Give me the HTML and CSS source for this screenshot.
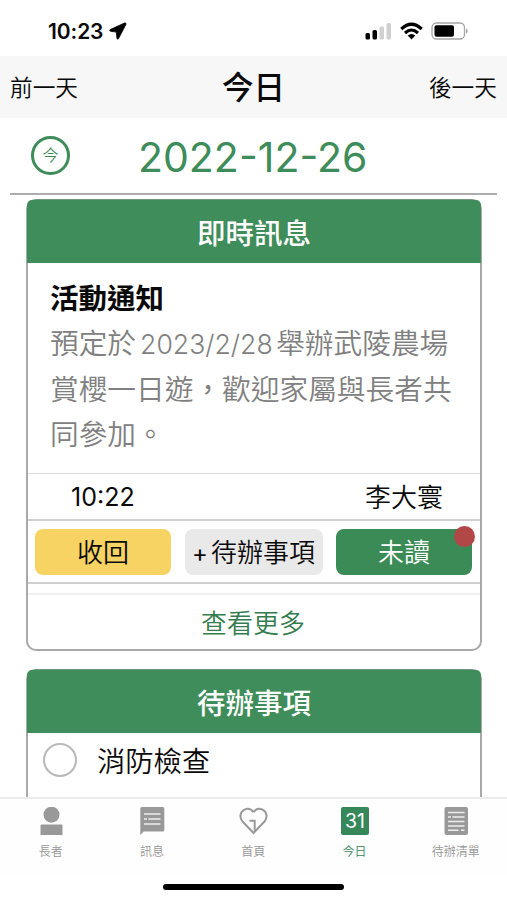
FILE: index.html
```html
<!DOCTYPE html>
<html lang="zh-Hant">
<head>
<meta charset="utf-8">
<meta name="viewport" content="width=device-width, initial-scale=1">
<title>今日</title>
<link rel="stylesheet" href="styles.css">
</head>
<body>
<div class="app">
  <div class="status">
    <span class="clock">10:23</span>
    <svg class="loc" width="18" height="18" viewBox="0 0 18 18"><path d="M15.500 1 1.200 7.600q-1.200.8.200 1.600l5.800.9.800 6.300q.6 1.600 1.600.1L17 2.200q.2-1.700-1.500-1.200z" stroke="#000" stroke-width=".8"/></svg>
    <svg class="signals" width="106" height="20" viewBox="0 0 106 20">
      <rect x="0.5" y="12" width="4.500" height="6.500" rx="1.500"/><rect x="7.500" y="9" width="4.500" height="9.500" rx="1.500"/>
      <rect x="14.500" y="5.500" width="4.500" height="13" rx="1.500" fill="#d0d0d0"/><rect x="21.500" y="2" width="4.500" height="16.500" rx="1.500" fill="#d0d0d0"/>
      <g fill="none" stroke="#000" stroke-width="3.100"><path d="M36.300 8Q46.500 -1.500 56.700 8"/><path d="M40 12Q46.500 6 53 12"/></g>
      <path d="M42.700 14.600Q46.500 11.600 50.300 14.600L46.500 18.400z"/>
      <rect x="67" y="2" width="32.500" height="16" rx="4.500" fill="#fff" stroke="#a5a5a5" stroke-width="1.300"/>
      <rect x="69.500" y="4.300" width="19.500" height="11.500" rx="2"/><path d="M101 7.200q3.500 2.800 0 5.600z" fill="#a5a5a5"/>
    </svg>
  </div>
  <header class="nav"><span>前一天</span><h1>今日</h1><span>後一天</span></header>
  <div class="datebar"><button class="today">今</button><span class="date">2022-12-26</span></div>
  <main>
    <section class="card news">
      <h2>即時訊息</h2>
      <div class="message"><h3>活動通知</h3><p>預定於<span class="num">2023/2/28</span>舉辦武陵農場<br>賞櫻一日遊，歡迎家屬與長者共<br>同參加。</p></div>
      <div class="meta"><span class="time">10:22</span><span>李大寰</span></div>
      <div class="actions"><button class="btn yellow">收回</button><button class="btn gray"><span class="plus">+</span>待辦事項</button><button class="btn green">未讀<i class="dot"></i></button></div>
      <div class="more">查看更多</div>
    </section>
    <section class="card todo">
      <h2>待辦事項</h2>
      <div class="task"><i class="check"></i><span>消防檢查</span></div>
    </section>
  </main>
  <nav class="tabs">
    <div class="tab"><svg width="30" height="30" viewBox="0 0 30 30"><circle cx="15.500" cy="7.700" r="8"/><path d="M5.500 17.500h20q1 0 1 1v9.500h-22v-9.500q0-1 1-1z"/></svg><span>長者</span></div>
    <div class="tab"><svg width="30" height="30" viewBox="0 0 30 30"><path d="M4.800 0h21q1.500 0 1.500 1.500v21.500q0 1.500-1.500 1.500H6.800l-3.500 3.500V1.500Q3.300 0 4.800 0z"/><path class="lines" d="M7 7h16.500M7 12h3m1.500 0h12M7 17h16.500"/></svg><span>訊息</span></div>
    <div class="tab"><svg width="30" height="30" viewBox="0 0 30 30"><path class="outline" d="M15.500 5.200C13 1.800 9.500 1.200 6.500 2.700C2 5 1.200 10.500 4.500 14.500L15.500 26l11-11.500C29.800 10.500 29 5 24.500 2.700C21.500 1.200 18 1.800 15.500 5.200M11.500 13.800h5.200v11"/></svg><span>首頁</span></div>
    <div class="tab active"><svg width="30" height="30" viewBox="0 0 30 30"><rect x="1" y="0" width="28" height="28" rx="2"/><text x="15" y="21">31</text></svg><span>今日</span></div>
    <div class="tab"><svg width="30" height="30" viewBox="0 0 30 30"><rect x="3.500" y="0" width="23.500" height="28" rx="2"/><path class="lines" d="M7 5.500h16.500M7 10h3m1.500 0h12M7 14.500h16.500M7 19h16.500M7 23.300h10.500m2.500 0h3.500"/></svg><span>待辦清單</span></div>
  </nav>
  <div class="home"></div>
</div>
</body>
</html>
```
FILE: styles.css
```css
* { box-sizing: border-box; }
body { margin: 0; background: #fff; color: #0a0a0a; font-family: Inter, "Noto Sans CJK TC", sans-serif; font-weight: 350; }
h1, h2, h3, p { margin: 0; }
button { border: 0; padding: 0; font: inherit; color: inherit; }
.app { height: 900px; display: flex; flex-direction: column; overflow: hidden; }
.status { height: 56px; flex: none; display: flex; align-items: center; padding: 6px 36px 0 48px; }
.clock { font-size: 21px; font-weight: 600; letter-spacing: -.1px; }
.loc { margin-left: 6px; }
.signals { margin-left: auto; }
.nav { height: 62px; flex: none; background: #f7f7f7; display: flex; align-items: center; justify-content: space-between; padding: 0 10px; font-size: 22.700px; }
.nav h1 { font-size: 31.500px; font-weight: 500; line-height: 62px; padding-top: 2px; }
.nav span { padding-bottom: 1px; }
.datebar { height: 77px; flex: none; margin: 0 10px; border-bottom: 2px solid #adadad; display: flex; align-items: center; padding-left: 21px; }
.today { width: 39px; height: 39px; border-radius: 50%; border: 3px solid #3e8c59; background: #fff; color: #3e8c59; font-size: 16px; line-height: 33px; }
.date { margin-left: 68px; color: #3e8c59; font-size: 41px; font-weight: 400; line-height: 73px; padding-top: 4px; }
main { flex: 1; min-height: 0; overflow: hidden; padding: 4px 25px 0 26px; }
.card { border: 2px solid #a9a9a9; border-top-color: #71977e; border-radius: 10px; background: #fff; }
.card h2 { height: 63px; margin: -1px -1px 0; border-radius: 5px 5px 0 0; background: #3f8d5a; color: #fff; text-align: center; font-size: 28.500px; line-height: 67px; font-weight: 500; }
.news { height: 452px; }
.message { height: 210px; padding: 13px 0 0 22px; }
.message h3 { font-size: 28.500px; line-height: 45px; font-weight: 700; }
.message p { color: #808080; font-size: 28.700px; line-height: 45px; white-space: nowrap; }
.num { margin: 0 3.500px 0 4px; font-size: 26.600px; }
.meta { height: 48px; border-top: 1px solid #ddd; border-bottom: 2px solid #d0d0d0; display: flex; justify-content: space-between; align-items: center; padding: 2px 37px 0 43px; font-size: 26px; line-height: 45px; }
.time { font-size: 25px; font-weight: 400; }
.actions { height: 63px; border-bottom: 2px solid #d0d0d0; display: flex; justify-content: space-between; align-items: center; padding: 1px 8px 0 7px; }
.btn { position: relative; width: 136px; height: 46px; border-radius: 8px; font-size: 26px; line-height: 46px; padding-top: 1px; white-space: nowrap; }
.yellow { background: #f7d363; }
.gray { background: #e9e9e9; width: 138px; }
.plus { margin-right: 3px; font-size: 24px; font-weight: 400; }
.green { background: #3b8b57; color: #fff; }
.dot { position: absolute; width: 21px; height: 21px; right: -3px; top: -3px; border-radius: 50%; background: #b24748; }
.more { height: 56px; margin-top: 9px; border-top: 2px solid #f0f0f0; color: #347c4e; text-align: center; font-size: 26px; line-height: 57px; padding-right: 2px; }
.todo { margin-top: 18px; height: 200px; }
.task { display: flex; align-items: center; height: 54px; padding-left: 15px; font-size: 28.300px; }
.task span { padding-bottom: 2px; }
.check { width: 34px; height: 34px; border: 2px solid #b9b9b9; border-radius: 50%; margin-right: 20px; }
.tabs { height: 78px; flex: none; border-top: 2px solid #ececec; display: grid; grid-template-columns: repeat(5, 101.300px); background: #fefefe; }
.tab { display: flex; flex-direction: column; align-items: center; padding-top: 8px; color: #969696; font-size: 12px; }
.tab svg { fill: #999; }
.tab span { line-height: 18px; margin-top: 6px; }
.lines { stroke: #eee; stroke-width: 1.600; fill: none; }
.outline { fill: none; stroke: #999; stroke-width: 2; }
.tab.active { color: #36855a; }
.tab.active svg { fill: #36885a; }
.tab text { fill: #fff; font-size: 19.500px; text-anchor: middle; font-weight: 400; }
.home { width: 181px; height: 6px; flex: none; border-radius: 3px; background: #000; margin: 9px auto 10px; }
```
